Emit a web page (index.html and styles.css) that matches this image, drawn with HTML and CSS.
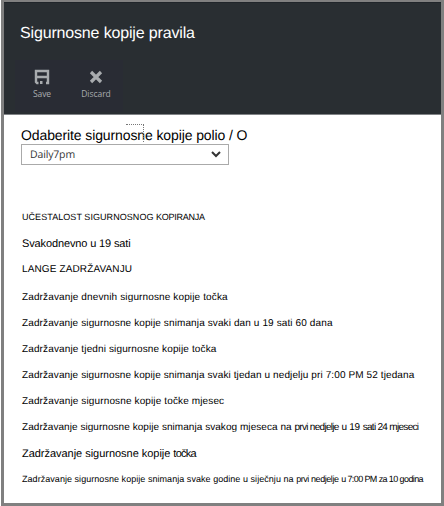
FILE: index.html
```html
<!DOCTYPE html>
<html lang="hr">
<head>
<meta charset="utf-8">
<title>Sigurnosne kopije pravila</title>
<link rel="stylesheet" href="styles.css">
</head>
<body>
<main class="blade">
  <header class="header">
    <h1 class="title">Sigurnosne kopije pravila</h1>
    <div class="toolbar">
      <button class="tool save"><svg width="16" height="16" viewBox="0 0 16 16"><path d="M4.5 14H3L2 13V2h12v12h-2 M2 8h12" fill="none" stroke="currentColor" stroke-width="2.4"/><path d="M6 12h2.5v3H6z" fill="currentColor"/></svg><span>Save</span></button>
      <button class="tool discard"><svg width="16" height="16" viewBox="0 0 16 16"><path d="M3 3l10 10M13 3L3 13" stroke="currentColor" stroke-width="3.2"/></svg><span>Discard</span></button>
    </div>
  </header>
  <section class="content">
    <div class="label">Odaberite sigurnosne kopije polio / O<i class="focus"></i></div>
    <div class="select"><span>Daily7pm</span><svg width="10" height="7" viewBox="0 0 10 7"><path d="M1 1l4 4 4-4" fill="none" stroke="currentColor" stroke-width="2"/></svg></div>
    <div class="rows">
      <p class="row frequency">UČESTALOST SIGURNOSNOG <span class="end">KOPIRANJA</span></p>
      <p class="row schedule">Svakodnevno u 19 sati</p>
      <p class="row range">LANGE ZADRŽAVANJU</p>
      <p class="row">Zadržavanje dnevnih sigurnosne kopije točka</p>
      <p class="row daily">Zadržavanje sigurnosne kopije snimanja svaki dan u 19 sati 60 dana</p>
      <p class="row">Zadržavanje tjedni sigurnosne kopije točka</p>
      <p class="row weekly">Zadržavanje sigurnosne kopije snimanja svaki tjedan u nedjelju pri 7:00 PM 52 tjedana</p>
      <p class="row">Zadržavanje sigurnosne kopije točke mjesec</p>
      <p class="row monthly">Zadržavanje sigurnosne kopije snimanja svakog mjeseca na <span class="day">prvi nedjelje</span> <span class="hour">u 19</span> <span class="end">sati 24 mjeseci</span></p>
      <p class="row point">Zadržavanje sigurnosne kopije <span class="end">točka</span></p>
      <p class="row yearly">Zadržavanje sigurnosne kopije snimanja svake godine u siječnju na <span class="day">prvi nedjelje</span> <span class="end">u 7:00 PM za 10 godina</span></p>
    </div>
  </section>
</main>
</body>
</html>
```
FILE: styles.css
```css
* { box-sizing: border-box; }
body { margin: 0; background: #fff; font-family: "Liberation Sans", Arial, sans-serif; color: #000; text-rendering: geometricPrecision; }
.blade { width: 443px; height: 506px; margin-left: 1px; border: 3px solid #808080; border-top-width: 2px; overflow: hidden; white-space: nowrap; }
.header { height: 113px; background: #292e32; border-bottom: 1px solid #808386; border-top: 1px solid #20252a; color: #fff; }
.title { margin: 0; padding: 21px 0 0 16px; font-size: 16px; line-height: 20px; font-weight: 400; letter-spacing: -0.16px; }
.toolbar { display: flex; width: 108px; height: 52px; margin: 16px 0 0 11px; background: #292c34; }
.tool { display: flex; flex-direction: column; align-items: center; width: 54px; padding: 9px 0 0; border: 0; background: none; color: #a8abae; font: 8.5px/12px "Open Sans", sans-serif; letter-spacing: -0.05px; gap: 3px; }
.content { padding: 11px 0 0 17px; }
.label { position: relative; height: 18px; font-size: 14px; line-height: 18px; letter-spacing: -0.11px; }
.focus { position: absolute; left: 105px; top: -2px; width: 18px; height: 18px; border-top: 1px dotted #777; border-right: 1px dotted #777; }
.select { display: flex; align-items: center; justify-content: space-between; width: 208px; height: 21px; padding: 0 7px 0 8px; border: 1px solid #aaa; color: #333; font: 10.5px/18px "Open Sans", sans-serif; letter-spacing: -0.15px; }
.rows { margin-top: 39px; padding-left: 1px; }
.row { margin: 0; height: 26px; line-height: 26px; font-size: 10px; letter-spacing: 0.13px; }
.frequency { height: 27px; font-size: 9px; letter-spacing: 0.06px; }
.frequency .end { letter-spacing: -0.26px; }
.schedule { font-size: 11px; letter-spacing: -0.13px; }
.range { height: 28px; }
.daily { letter-spacing: 0.115px; }
.weekly { letter-spacing: 0.11px; }
.monthly { letter-spacing: 0.05px; }
.monthly .day { letter-spacing: -0.7px; }
.monthly .hour { letter-spacing: -0.3px; }
.monthly .end { letter-spacing: -0.7px; }
.point { font-size: 11px; letter-spacing: -0.03px; }
.point .end { letter-spacing: -0.76px; }
.yearly { line-height: 24px; font-size: 9px; letter-spacing: 0.045px; }
.yearly .day { letter-spacing: -0.43px; }
.yearly .end { letter-spacing: -0.6px; }
```
